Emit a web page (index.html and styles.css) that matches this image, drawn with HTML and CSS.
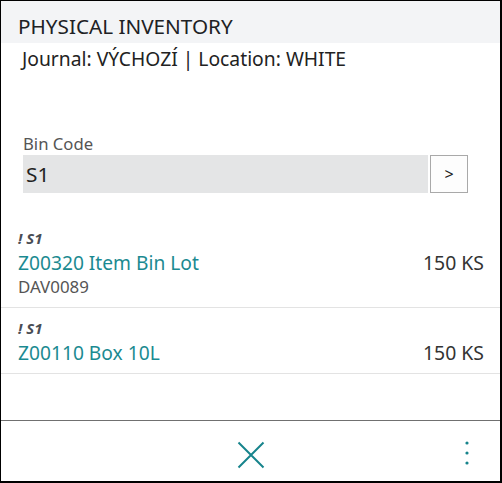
FILE: index.html
```html
<!DOCTYPE html>
<html>
<head>
<meta charset="utf-8">
<link rel="stylesheet" href="styles.css">
</head>
<body>
<div class="frame">
  <div class="header"><span class="title">PHYSICAL INVENTORY</span></div>
  <div class="subtitle">Journal: VÝCHOZÍ | Location: WHITE</div>
  <div class="bin">
    <div class="label">Bin Code</div>
    <div class="input-row">
      <div class="input">S1</div>
      <div class="btn">&gt;</div>
    </div>
  </div>
  <div class="list">
    <div class="row">
      <div class="tag">! S1</div>
      <div class="line">
        <span class="item">Z00320 Item Bin Lot</span>
        <span class="qty">150 KS</span>
      </div>
      <div class="lot">DAV0089</div>
    </div>
    <div class="row">
      <div class="tag">! S1</div>
      <div class="line">
        <span class="item">Z00110 Box 10L</span>
        <span class="qty">150 KS</span>
      </div>
    </div>
  </div>
  <div class="spacer"></div>
  <div class="footer">
    <div></div>
    <svg class="close" width="28" height="28" viewBox="0 0 28 28"><path d="M1.5 1.5 L26.5 26.5 M26.5 1.5 L1.5 26.5" stroke="#17848c" stroke-width="2" fill="none"/></svg>
    <div class="more">
      <svg class="kebab" width="6" height="24" viewBox="0 0 6 24"><circle cx="3" cy="2" r="1.6" fill="#17848c"/><circle cx="3" cy="12" r="1.6" fill="#17848c"/><circle cx="3" cy="22" r="1.6" fill="#17848c"/></svg>
    </div>
  </div>
</div>
</body>
</html>
```
FILE: styles.css
```css
* { box-sizing: border-box; }
html, body { margin: 0; padding: 0; background: #fff; }
body { font-family: "Noto Sans", "Open Sans", sans-serif; color: #222; }
.frame {
  width: 502px; height: 483px;
  border-top: 1px solid #000; border-left: 1px solid #000;
  border-right: 2px solid #000; border-bottom: 2px solid #000;
  display: flex; flex-direction: column;
}
.header {
  height: 42px; background: #f3f4f6;
  padding: 12px 0 0 17px;
}
.title { display: block; font-size: 20.7px; line-height: 26px; color: #202124; }
.subtitle { font-size: 19.3px; line-height: 24px; padding-left: 21px; margin-top: 4px; color: #222; }
.bin { margin-top: 62px; padding-left: 22px; padding-right: 32px; }
.label { font-size: 16.7px; color: #555; line-height: 21px; }
.input-row { display: flex; gap: 2px; margin-top: 1px; }
.input {
  flex: 1; height: 38px; background: #e4e5e6;
  font-size: 20.8px; line-height: 38px; padding-left: 3px; color: #222;
}
.btn {
  width: 38px; height: 38px; border: 1px solid #a9a9a9; background: #fdfdfd;
  display: flex; align-items: center; justify-content: center;
  font-size: 16px; color: #222;
}
.list { margin-top: 25px; }
.row {
  padding: 11px 16px 7px 17px; border-bottom: 1px solid #e3e3e3;
}
.tag { font-size: 15px; font-weight: bold; font-style: italic; color: #4a4d55; line-height: 18px; }
.line { display: flex; justify-content: space-between; align-items: baseline; margin-top: 3px; height: 26px; }
.item { font-size: 19.2px; color: #1b8a91; line-height: 26px; }
.qty { font-size: 19.4px; color: #333; line-height: 26px; }
.lot { font-size: 16.9px; color: #555; line-height: 22px; margin: 0 0 2px 0; }
.spacer { flex: 1; }
.footer {
  height: 61px; border-top: 1px solid #707070;
  display: grid; grid-template-columns: 1fr auto 1fr; align-items: start;
}
.close { margin-top: 20px; }
.more { display: flex; justify-content: flex-end; padding-right: 30px; padding-top: 20px; }
```
